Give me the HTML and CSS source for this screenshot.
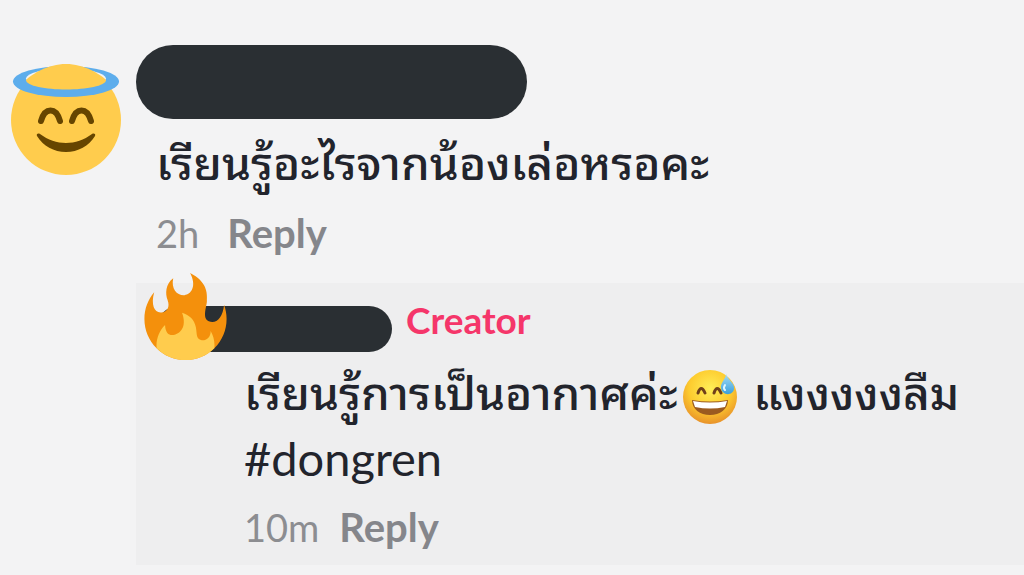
FILE: index.html
```
<!doctype html>
<html lang="th">
<head>
<meta charset="UTF-8">
<meta name="viewport" content="width=device-width, initial-scale=1.0">
<title>Comments</title>
<link rel="stylesheet" href="styles.css">
</head>
<body>
<main class="comments">
  <article class="comment">
    <svg class="avatar" viewBox="0 0 112 114" role="img" aria-label="Angel">
      <circle cx="56" cy="57" r="55" fill="#ffcc4d"/>
      <ellipse cx="56" cy="18.500" rx="53" ry="15.500" fill="#5dadec"/>
      <ellipse cx="56" cy="15.500" rx="40" ry="10" fill="#f3f3f4"/>
      <path d="M16 17C22 11 38 1 56 1s34 10 40 16c0 6-20 9.500-40 9.500S16 23 16 17z" fill="#ffcc4d"/>
      <path d="M31 58c4-14 15-14 19 0M62 58c4-14 15-14 19 0" fill="none" stroke="#664500" stroke-width="6" stroke-linecap="round"/>
      <path d="M27 73c-1-2 1-3 3-2 16 12 36 12 52 0 2-1 4 0 3 2-6 10-17 16-29 16s-23-6-29-16z" fill="#664500"/>
    </svg>
    <div class="content">
      <div class="name-bar"></div>
      <p class="text">เรียนรู้อะไรจากน้องเล่อหรอคะ</p>
      <div class="meta">
        <time>2h</time>
        <button class="reply-btn" type="button">Reply</button>
      </div>
    </div>
  </article>

  <article class="comment-reply">
    <header class="reply-head">
      <div class="reply-name-bar"></div>
      <svg class="fire" viewBox="0 0 36 36" role="img" aria-label="Fire">
        <path fill="#f4900c" d="M35 19c0-2.062-.367-4.039-1.04-5.868-.46 5.389-3.333 8.157-6.335 6.868-2.812-1.208-.917-5.917-.777-8.164.236-3.809-.012-8.169-6.931-11.794 2.875 5.5.333 8.917-2.333 9.125-2.958.231-5.667-2.542-4.667-7.042-3.238 2.386-3.332 6.402-2.333 9 1.042 2.708-.042 4.958-2.583 5.208-2.84.28-4.418-3.041-2.963-8.333C2.52 10.965 1 14.805 1 19c0 9.389 7.611 17 17 17s17-7.611 17-17z"/>
        <path fill="#ffcc4d" d="M28.394 23.999c.148 3.084-2.561 4.293-4.019 3.709-2.106-.843-1.541-2.291-2.083-5.291s-2.625-5.083-5.708-6c2.25 6.333-1.247 8.667-3.08 9.084-1.872.426-3.753-.001-3.968-4.007C7.352 23.668 6 26.676 6 30c0 .368.023.73.055 1.09C9.125 34.124 13.342 36 18 36s8.875-1.876 11.945-4.91c.032-.36.055-.722.055-1.09 0-2.187-.584-4.236-1.606-6.001z"/>
      </svg>
      <span class="creator">Creator</span>
    </header>
    <p class="text">เรียนรู้การเป็นอากาศค่ะ<svg class="emoji" viewBox="0 0 56 56" role="img" aria-label="Sweat smile">
        <defs>
          <radialGradient id="face" cx="50%" cy="35%" r="65%">
            <stop offset="0" stop-color="#ffee58"/>
            <stop offset=".6" stop-color="#fdcb2e"/>
            <stop offset="1" stop-color="#e8922a"/>
          </radialGradient>
          <linearGradient id="drop" x1="0" y1="0" x2="0" y2="1">
            <stop offset="0" stop-color="#a5dcf5"/>
            <stop offset="1" stop-color="#3ba0dc"/>
          </linearGradient>
        </defs>
        <circle cx="28" cy="27" r="27" fill="url(#face)"/>
        <path d="M16 23q3-9 7 0M32 23q3-9 7 0" fill="none" stroke="#70401a" stroke-width="3" stroke-linecap="round"/>
        <path d="M10 30q18 3 36 0c0 9-8 15-18 15s-18-6-18-15z" fill="#9a5a20"/>
        <path d="M11 31q17 3 34 0l-2 6q-15 3-30 0z" fill="#fff"/>
        <path d="M44 4c1 5 9 9 8 15-1 7-12 7-13-1-1-5 5-9 5-14z" fill="url(#drop)"/>
        <path d="M43 15q-2 3 0 5" fill="none" stroke="#e1f6ff" stroke-width="2" stroke-linecap="round"/>
      </svg> แงงงงงลืม<br><a class="hashtag" href="#dongren">#dongren</a></p>
    <div class="meta">
      <time>10m</time>
      <button class="reply-btn" type="button">Reply</button>
    </div>
  </article>
</main>
</body>
</html>
```
FILE: styles.css
```
body {
    margin: 0;
    background: #f3f3f4;
    color: #22242c;
    font-family: Lato, "Noto Sans Thai Looped", Loma, Waree, Garuda, "Noto Sans Thai", sans-serif;
}
.comment {
    display: flex;
    align-items: flex-start;
    padding: 45px 16px 20px 10px;
}
.avatar {
    width: 112px;
    flex-shrink: 0;
    margin-top: 18px;
}
.content {
    flex: 1;
    padding-left: 14px;
}
.name-bar {
    width: 100%;
    max-width: 391px;
    height: 74px;
    border-radius: 37px;
    background: #2a2f33;
}
.text {
    margin: 0;
    font-size: 46px;
    font-weight: 500;
    line-height: 64px;
}
.content .text {
    padding: 12px 0 8px 20px;
}
.content .meta {
    padding-left: 20px;
}
.meta {
    display: flex;
    align-items: center;
    gap: 28px;
    height: 60px;
    font-size: 40px;
    color: #8c8d91;
}
.meta time {
    font-size: 38px;
}
.reply-btn {
    padding: 0;
    border: 0;
    background: none;
    color: #85868b;
    font: inherit;
    font-weight: bold;
    cursor: pointer;
}
.comment-reply {
    margin-left: 136px;
    padding: 16px 16px 8px 108px;
    background: #eeeeef;
}
.reply-head {
    position: relative;
    display: flex;
    align-items: flex-start;
    gap: 14px;
    height: 55px;
    padding-top: 7px;
    margin-left: -88px;
}
.reply-name-bar {
    width: 236px;
    height: 46px;
    border-radius: 23px;
    background: #2a2f33;
}
/* the flame sits over the left end of the bar */
.fire {
    position: absolute;
    left: -14px;
    top: -26px;
    width: 87px;
}
.creator {
    color: #f5366a;
    font-size: 37px;
    font-weight: bold;
    line-height: 28px;
}
.comment-reply .meta {
    gap: 20px;
    padding-top: 6px;
}
.emoji {
    width: 56px;
    height: 56px;
    margin: 0 4px;
    vertical-align: middle;
}
.hashtag {
    color: inherit;
    font-size: 47px;
    font-weight: normal;
    text-decoration: none;
}
```
